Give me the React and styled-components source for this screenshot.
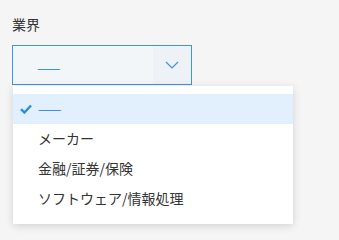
import React, { useState } from 'react';
import styled, { createGlobalStyle } from 'styled-components';

const GlobalStyle = createGlobalStyle`
    html, body {
        margin: 0;
        padding: 0;
        background: #f5f5f5;
        font-family: "Noto Sans CJK JP", "Noto Sans", sans-serif;
    }
`;

const options = ['——', 'メーカー', '金融/証券/保険', 'ソフトウェア/情報処理'];

const App = () => {
    const [selected, setSelected] = useState(0);

    return (
        <Page>
            <GlobalStyle />
            <Label>業界</Label>
            <Field>
                <SelectBox>
                    <Value>{options[selected]}</Value>
                    <Arrow>
                        <svg width="14" height="8" viewBox="0 0 14 8" fill="none">
                            <path d="M1 1l6 6 6-6" stroke="#3b95dc" strokeWidth="1.2" />
                        </svg>
                    </Arrow>
                </SelectBox>
                <Menu>
                    {options.map((opt, i) => (
                        <Option key={opt} active={i === selected} onClick={() => setSelected(i)}>
                            <Check>
                                {i === selected && (
                                    <svg width="12" height="10" viewBox="0 0 12 10">
                                        <path d="M1 5.2l3.4 3.3L11 1.5" stroke="#2f8ad8" strokeWidth="2.4" fill="none" />
                                    </svg>
                                )}
                            </Check>
                            <OptionText active={i === selected}>{opt}</OptionText>
                        </Option>
                    ))}
                </Menu>
            </Field>
        </Page>
    );
};

const Page = styled.div`
    width: 339px;
    height: 240px;
    padding: 15px 12px 0;
    box-sizing: border-box;
`;

const Label = styled.div`
    font-size: 14px;
    color: #333;
    line-height: 18px;
    margin-bottom: 12px;
`;

const Field = styled.div`
    position: relative;
    width: 180px;
`;

const SelectBox = styled.div`
    display: flex;
    height: 40px;
    box-sizing: border-box;
    border: 1px solid #3b97e0;
    background: #f3f6f9;
`;

const Value = styled.div`
    flex: 1;
    display: flex;
    align-items: center;
    padding-left: 24px;
    padding-top: 3px;
    color: #3b95dc;
    font-size: 14px;
`;

const Arrow = styled.div`
    width: 38px;
    display: flex;
    align-items: center;
    justify-content: center;
    background: #eef2f6;
`;

const Menu = styled.div`
    position: absolute;
    top: 41px;
    left: 1px;
    width: 280px;
    background: #fff;
    padding: 8px 0 10px;
    box-shadow: 0 2px 8px rgba(0, 0, 0, 0.14);
`;

const Option = styled.div`
    display: flex;
    align-items: center;
    height: 30px;
    padding-left: 7px;
    background: ${props => (props.active ? '#e1f0fc' : '#fff')};
    cursor: pointer;
`;

const Check = styled.span`
    width: 18px;
    display: flex;
    align-items: center;
`;

const OptionText = styled.span`
    font-size: 14px;
    line-height: 16px;
    margin-top: -3px;
    color: ${props => (props.active ? '#3b95dc' : '#333')};
`;

export default App;
